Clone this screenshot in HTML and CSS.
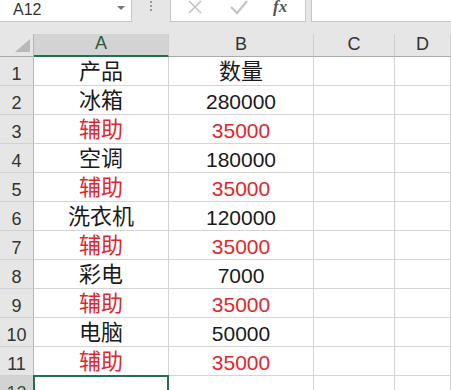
FILE: index.html
```html
<!DOCTYPE html>
<html lang="zh-CN">

<head>
    <meta charset="UTF-8">
    <meta name="viewport" content="width=device-width, initial-scale=1.0">
    <title>数量表</title>
    <link rel="stylesheet" href="styles.css">
</head>

<body>
    <div class="formula-bar">
        <div class="name-box">
            <span>A12</span>
            <span class="arrow"></span>
        </div>
        <div class="grip">
            <i></i><i></i><i></i>
        </div>
        <div class="fx-box">
            <svg class="icon" width="16" height="16" viewBox="0 0 16 16">
                <path d="M2 1 L14 13 M14 1 L2 13" stroke="#c4c4c4" stroke-width="1.6" fill="none" />
            </svg>
            <svg class="icon" width="20" height="16" viewBox="0 0 20 16">
                <path d="M2 7 L8 13 L18 1" stroke="#c4c4c4" stroke-width="2.2" fill="none" />
            </svg>
            <span class="fx">fx</span>
        </div>
        <div class="formula-input"></div>
    </div>

    <div class="sheet">
        <div class="corner"><span class="tri"></span></div>
        <div class="col-head selected">A</div>
        <div class="col-head">B</div>
        <div class="col-head">C</div>
        <div class="col-head">D</div>

        <div class="row-head">1</div>
        <div class="cell">产品</div>
        <div class="cell">数量</div>
        <div class="cell"></div>
        <div class="cell"></div>

        <div class="row-head">2</div>
        <div class="cell">冰箱</div>
        <div class="cell num">280000</div>
        <div class="cell"></div>
        <div class="cell"></div>

        <div class="row-head">3</div>
        <div class="cell red">辅助</div>
        <div class="cell num red">35000</div>
        <div class="cell"></div>
        <div class="cell"></div>

        <div class="row-head">4</div>
        <div class="cell">空调</div>
        <div class="cell num">180000</div>
        <div class="cell"></div>
        <div class="cell"></div>

        <div class="row-head">5</div>
        <div class="cell red">辅助</div>
        <div class="cell num red">35000</div>
        <div class="cell"></div>
        <div class="cell"></div>

        <div class="row-head">6</div>
        <div class="cell">洗衣机</div>
        <div class="cell num">120000</div>
        <div class="cell"></div>
        <div class="cell"></div>

        <div class="row-head">7</div>
        <div class="cell red">辅助</div>
        <div class="cell num red">35000</div>
        <div class="cell"></div>
        <div class="cell"></div>

        <div class="row-head">8</div>
        <div class="cell">彩电</div>
        <div class="cell num">7000</div>
        <div class="cell"></div>
        <div class="cell"></div>

        <div class="row-head">9</div>
        <div class="cell red">辅助</div>
        <div class="cell num red">35000</div>
        <div class="cell"></div>
        <div class="cell"></div>

        <div class="row-head">10</div>
        <div class="cell">电脑</div>
        <div class="cell num">50000</div>
        <div class="cell"></div>
        <div class="cell"></div>

        <div class="row-head">11</div>
        <div class="cell red">辅助</div>
        <div class="cell num red">35000</div>
        <div class="cell"></div>
        <div class="cell"></div>

        <div class="row-head selected">12</div>
        <div class="cell active"></div>
        <div class="cell"></div>
        <div class="cell"></div>
        <div class="cell"></div>
    </div>
</body>

</html>
```

FILE: styles.css
```css
* {
    margin: 0;
    padding: 0;
    box-sizing: border-box;
}

body {
    width: 451px;
    height: 390px;
    overflow: hidden;
    background-color: #fff;
    font-family: "Liberation Sans", "Noto Sans CJK SC", sans-serif;
    color: #1a1a1a;
}

/* formula bar */
.formula-bar {
    display: flex;
    align-items: flex-start;
    height: 34px;
    background-color: #e6e6e6;
}

.name-box {
    display: flex;
    align-items: center;
    justify-content: space-between;
    width: 132px;
    height: 22px;
    padding: 0 6px 2px 13px;
    background-color: #fff;
    border-right: 1px solid #c6c6c6;
    border-bottom: 1px solid #c6c6c6;
    font-size: 16px;
    color: #333;
}

.arrow {
    width: 0;
    height: 0;
    margin-top: -4px;
    border-left: 4px solid transparent;
    border-right: 4px solid transparent;
    border-top: 4px solid #777;
}

.grip {
    display: flex;
    flex-direction: column;
    align-items: center;
    gap: 2px;
    width: 38px;
    padding-top: 1px;
}

.grip i {
    width: 2px;
    height: 2px;
    background-color: #9a9a9a;
}

.fx-box {
    display: flex;
    align-items: flex-start;
    width: 136px;
    height: 22px;
    padding: 0 0 0 16px;
    background-color: #fff;
    border: 1px solid #c6c6c6;
    border-top: none;
}

.fx-box .icon {
    margin-right: 26px;
}

.fx-box .icon:nth-child(2) {
    margin-right: 24px;
}

.fx {
    margin-top: -3px;
    font-family: "Liberation Serif", serif;
    font-style: italic;
    font-weight: bold;
    font-size: 17px;
    color: #555;
}

.formula-input {
    flex: 1;
    height: 22px;
    margin-left: 5px;
    background-color: #fff;
    border: 1px solid #c6c6c6;
    border-top: none;
    border-right: none;
}

/* sheet grid */
.sheet {
    display: grid;
    grid-template-columns: 34px 135px 145px 81px 1fr;
    grid-template-rows: 23px repeat(12, 29px);
}

.corner {
    position: relative;
    background-color: #e6e6e6;
    border-right: 1px solid #b4b4b4;
    border-bottom: 1px solid #ababab;
}

.tri {
    position: absolute;
    right: 3px;
    bottom: 4px;
    width: 0;
    height: 0;
    border-left: 15px solid transparent;
    border-bottom: 13px solid #b9b9b9;
}

.col-head {
    display: flex;
    align-items: flex-end;
    justify-content: center;
    padding-bottom: 1px;
    background-color: #e6e6e6;
    border-right: 1px solid #cfcfcf;
    border-bottom: 1px solid #ababab;
    font-size: 18px;
    color: #333;
}

.col-head.selected {
    background-color: #d3d3d3;
    border-bottom: 2px solid #217346;
    color: #2b5a3f;
}

.row-head {
    display: flex;
    align-items: flex-end;
    justify-content: center;
    padding-bottom: 0;
    background-color: #e6e6e6;
    border-right: 1px solid #b4b4b4;
    border-bottom: 1px solid #d0d0d0;
    font-size: 18px;
    line-height: 22px;
    color: #333;
}

.row-head.selected {
    background-color: #d3d3d3;
    color: #2b5a3f;
}

.cell {
    display: flex;
    align-items: flex-end;
    justify-content: center;
    border-right: 1px solid #d4d4d4;
    border-bottom: 1px solid #d4d4d4;
    font-size: 22px;
    line-height: 26px;
}

.cell.num {
    font-size: 21px;
    line-height: 25px;
}

.cell.red {
    color: #e3262c;
}

.cell.active {
    position: relative;
}

.cell.active::after {
    content: "";
    position: absolute;
    left: -1px;
    top: -1px;
    right: -1px;
    bottom: -1px;
    border: 2px solid #217346;
}
```
